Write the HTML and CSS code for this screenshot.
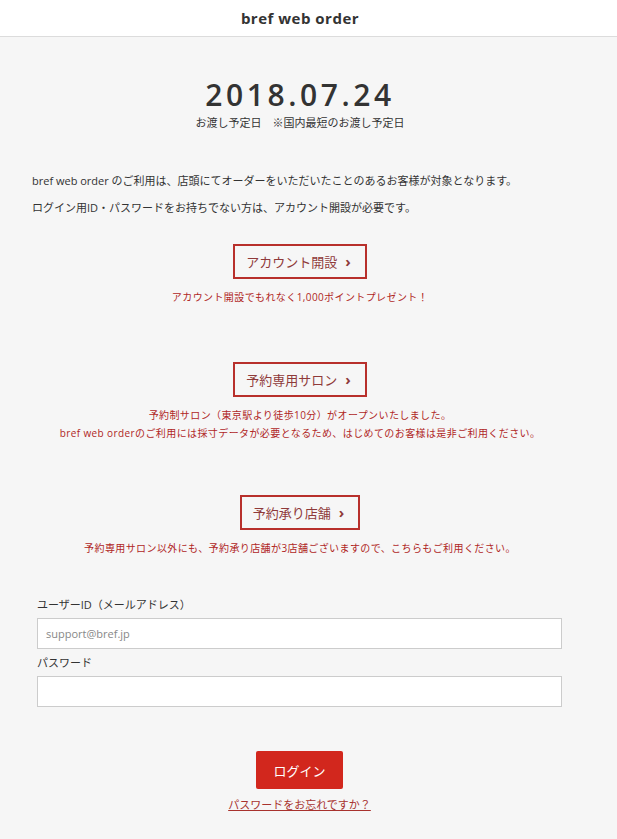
FILE: index.html
```html
<!DOCTYPE html>
<html lang="ja">
<head>
    <meta charset="UTF-8">
    <meta name="viewport" content="width=device-width, initial-scale=1.0">
    <title>bref web order</title>
    <link rel="stylesheet" href="styles.css">
</head>
<body>
    <header class="header">
        <div class="header-inner">bref web order</div>
    </header>

    <main class="page">
        <div class="delivery">
            <p class="delivery-date">2018.07.24</p>
            <p class="delivery-note">お渡し予定日　※国内最短のお渡し予定日</p>
        </div>

        <div class="intro">
            <p>bref web order のご利用は、店頭にてオーダーをいただいたことのあるお客様が対象となります。</p>
            <p>ログイン用ID・パスワードをお持ちでない方は、アカウント開設が必要です。</p>
        </div>

        <div class="link-block first">
            <a href="#" class="outline-btn">アカウント開設<span class="arrow">›</span></a>
            <p class="caption">アカウント開設でもれなく1,000ポイントプレゼント！</p>
        </div>

        <div class="link-block">
            <a href="#" class="outline-btn">予約専用サロン<span class="arrow">›</span></a>
            <p class="caption">予約制サロン（東京駅より徒歩10分）がオープンいたしました。<br>bref web orderのご利用には採寸データが必要となるため、はじめてのお客様は是非ご利用ください。</p>
        </div>

        <div class="link-block last">
            <a href="#" class="outline-btn">予約承り店舗<span class="arrow">›</span></a>
            <p class="caption">予約専用サロン以外にも、予約承り店舗が3店舗ございますので、こちらもご利用ください。</p>
        </div>

        <form class="login-form" onsubmit="return false;">
            <label for="userId">ユーザーID（メールアドレス）</label>
            <input type="text" id="userId" placeholder="support@bref.jp">
            <label for="password">パスワード</label>
            <input type="password" id="password">

            <div class="login-actions">
                <button type="submit" class="login-btn">ログイン</button>
                <a href="#" class="forgot">パスワードをお忘れですか？</a>
            </div>
        </form>
    </main>
</body>
</html>
```

FILE: styles.css
```css
* {
    margin: 0;
    padding: 0;
    box-sizing: border-box;
}

body {
    font-family: "Open Sans", "Noto Sans CJK JP", sans-serif;
    background: #f6f6f6;
    color: #333;
    font-size: 11px;
}

.header {
    background: #fff;
    border-bottom: 1px solid #dcdcdc;
}

.header-inner {
    width: 600px;
    height: 36px;
    line-height: 36px;
    text-align: center;
    font-size: 15px;
    font-weight: bold;
    letter-spacing: 0.5px;
    color: #333;
}

.page {
    width: 600px;
    padding-bottom: 40px;
}

.delivery {
    margin-top: 40px;
    text-align: center;
}

.delivery-date {
    font-size: 30px;
    line-height: 36px;
    font-weight: 600;
    letter-spacing: 3.6px;
    color: #333;
}

.delivery-note {
    margin-top: 2px;
    line-height: 16px;
    font-size: 11px;
}

.intro {
    margin-top: 41px;
    padding-left: 32px;
}

.intro p {
    line-height: 18px;
}

.intro p + p {
    margin-top: 9px;
}

.link-block {
    margin-top: 56px;
    text-align: center;
}

.link-block.first {
    margin-top: 27px;
}

.link-block.last {
    margin-top: 53px;
}

.outline-btn {
    display: inline-flex;
    align-items: center;
    height: 35px;
    padding: 0 14px 0 11px;
    border: 2px solid #b8302c;
    color: #8f3a3a;
    font-size: 13px;
    text-decoration: none;
}

.arrow {
    margin-left: 8px;
    font-weight: bold;
    font-size: 15px;
    line-height: 1;
}

.caption {
    margin-top: 9px;
    line-height: 18px;
    font-size: 10px;
    letter-spacing: 0.4px;
    color: #b0261f;
}

.login-form {
    margin-top: 39px;
    padding: 0 38px 0 37px;
}

.login-form label {
    display: block;
    line-height: 18px;
    font-size: 11px;
    margin-top: 5px;
}

.login-form input {
    display: block;
    width: 100%;
    height: 31px;
    margin-top: 4px;
    padding: 0 8px;
    border: 1px solid #ccc;
    background: #fff;
    font-family: inherit;
    font-size: 11px;
    color: #333;
}

.login-form input::placeholder {
    color: #888;
}

.login-actions {
    margin-top: 44px;
    display: flex;
    flex-direction: column;
    align-items: center;
}

.login-btn {
    width: 87px;
    height: 38px;
    border: none;
    border-radius: 2px;
    background: #d2271d;
    color: #fff;
    font-family: inherit;
    font-size: 13px;
    cursor: pointer;
}

.forgot {
    margin-top: 8px;
    line-height: 16px;
    font-size: 11px;
    color: #a8322e;
}
```
